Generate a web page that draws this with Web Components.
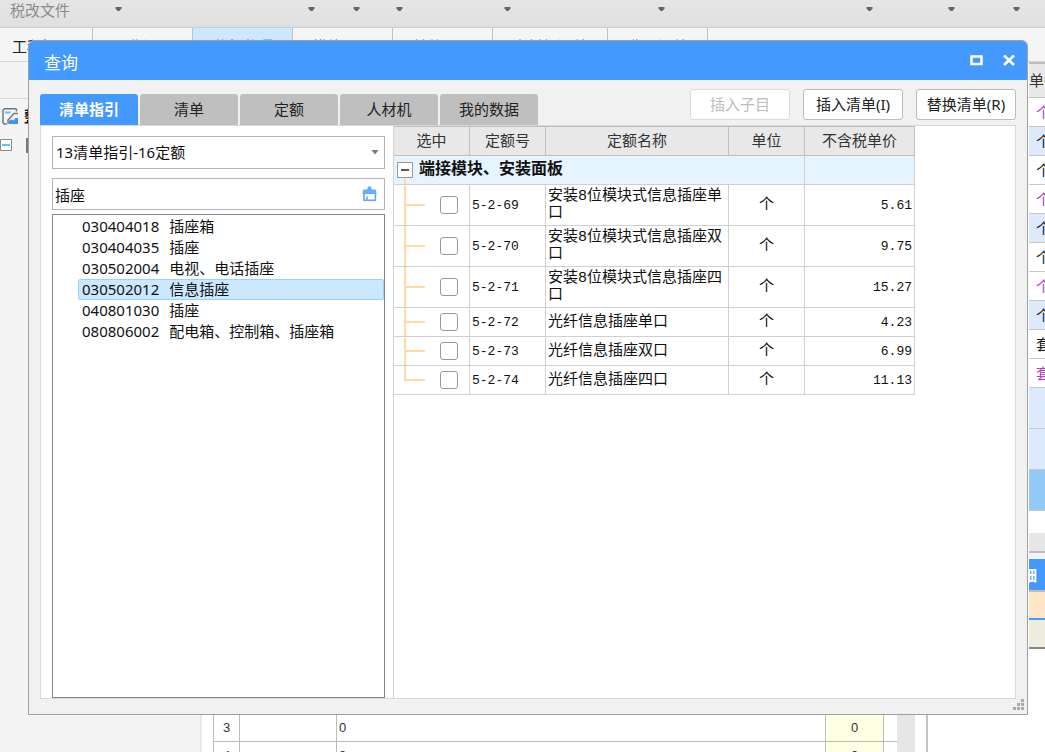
<!DOCTYPE html>
<html lang="zh-CN">
<head>
<meta charset="utf-8">
<title>查询</title>
<style>
html, body { margin: 0; height: 100%; overflow: hidden; }
body { font: 15px/21px "Noto Sans", "Noto Sans CJK SC", sans-serif; color: #111; background: #fff; }
</style>
</head>
<body>
<cost-app></cost-app>
<script>
const define = (name, html, setup) => customElements.define(name, class extends HTMLElement {
  constructor() {
    super();
    const t = document.createElement('template');
    t.innerHTML = '<style>*{box-sizing:border-box}</style>' + html;
    this.attachShadow({ mode: 'open' }).append(t.content.cloneNode(true));
  }
  connectedCallback() { if (setup) setup(this, this.shadowRoot); }
});

/* Toolbar above the workspace */
define('app-ribbon', `
<style>
:host { display: flex; flex: none; height: 28px; border-bottom: 1px solid #cbcbcb; background: linear-gradient(#e6e6e6, #dfdfdf); overflow: hidden; }
.group { display: flex; flex: none; justify-content: flex-end; }
.label { flex: 1; padding-left: 10px; color: #8c8c8c; white-space: nowrap; }
svg { flex: none; margin-top: 7px; }
</style>
<div id="row" style="display:flex"></div>`, (el, root) => {
  const widths = [123, 193, 45, 43, 108, 154, 208, 82, 65];
  root.getElementById('row').innerHTML = widths.map((w, i) =>
    `<div class="group" style="width:${w}px">${i ? '' : '<span class="label">税改文件</span>'}<svg width="8" height="5"><path d="M0.500 0h6v1.500l-2 2.500h-2l-2-2.500z" fill="#666"/></svg></div>`).join('');
});

/* Workspace tabs */
define('app-tabs', `
<style>
:host { display: flex; flex: none; height: 34px; background: #f5f5f5; border-bottom: 1px solid #d4d4d4; overflow: hidden; }
::slotted(a) { flex: none; width: 100px; border-right: 1px solid #c2c2c2; text-align: center; line-height: 36px; color: #888; text-decoration: none; }
::slotted(a:first-child) { width: 93px; padding-right: 8px; color: #222; }
::slotted(a.wide) { width: 115px; }
::slotted(a.on) { background: #cce8ff; color: #4499ff; font-weight: bold; }
</style><slot></slot>`);

/* Project tree at the left */
define('project-tree', `
<style>
:host { display: flex; flex: none; flex-direction: column; width: 202px; background: #f4f4f4; border-right: 2px solid #e8e8e8; }
.top { height: 37px; border-bottom: 1px solid #d8d8d8; }
.item { display: flex; align-items: center; gap: 5px; height: 34px; padding-left: 2px; font-weight: bold; }
.node { display: flex; gap: 14px; height: 24px; align-items: center; }
.page { width: 12px; height: 15px; border: 2px solid #777; }
</style>
<div class="top"></div>
<div class="item"><svg width="17" height="17" fill="none" stroke="#707880" stroke-width="1.500"><path d="M14.500 3.500V1.500L13.500.800H2.500L1 2v12.500L2 16h3"/><path d="M3 4.500h5.500" stroke="#6cb8ff" stroke-width="2"/><path d="M16 5.500h-4L6 12v3.500"/><path d="M6.500 16v-3l3-1.500 2 1 2-2.500H16v6z" fill="#3f95f5" stroke="none"/></svg><span>整</span></div>
<div class="node"><svg width="12" height="12"><path d="M.5.5h11v11H.5z" fill="#fff" stroke="#888"/><path d="M2 6h8" stroke="#2bb0e0" stroke-width="1.500"/></svg><span class="page"></span></div>`);

/* Bill rows, cut by the window edge */
define('bill-strip', `
<style>
:host { display: flex; flex: none; flex-direction: column; width: 119px; padding-left: 101px; overflow: hidden; border-left: 2px solid #c4c4c4; background: #fff; white-space: nowrap; }
table { border-collapse: separate; border-spacing: 0; width: 60px; border-top: 2px solid #bbb; }
th { height: 34px; padding: 0; text-align: left; font-weight: normal; background: #e8e8e8; border-bottom: 1px solid #c4c4c4; color: #333; }
td { height: 29px; padding: 0 0 0 7px; border-bottom: 1px solid #c8c8c8; color: #222; line-height: 20px; }
.blue { background: #dde9fd; } .p { color: #b040c0; }
td.tall { height: 41px; } .sel { background: #92c9f7; }
.sb { height: 18px; margin-top: 22px; background: #e6e6e6; }
.split { height: 8px; border-top: 2px solid #bdbdbd; background: #f3f3f3; }
.tab { height: 31px; color: #fff; background: #4499ff; font-weight: bold; text-indent: -7px; line-height: 32px; }
.peach { height: 28px; border-top: 2px solid #bdbdbd; background: #ffe5c8; }
.beige { height: 31px; border-top: 2px solid #4499ff; border-bottom: 2px solid #888; background: #eeeddf; }
</style>
<table><thead><tr><th>单价</th></tr></thead><tbody></tbody></table>
<div class="sb"></div><div class="split"></div><div class="tab">细</div><div class="peach"></div><div class="beige"></div>`, (el, root) => {
  const rows = [['p','个'],['blue','个'],['','个'],['p','个'],['blue','个'],['','个'],['p','个'],['blue','个'],['','套'],['p','套'],['blue tall',''],['blue tall',''],['sel tall','']];
  root.querySelector('tbody').innerHTML = rows.map(r => `<tr><td class="${r[0]}">${r[1]}</td></tr>`).join('');
});

/* Detail rows under the dialog */
define('detail-grid', `
<style>
:host { display: flex; flex: 1; min-width: 0; flex-direction: column; justify-content: flex-end; padding-left: 11px; overflow: hidden; }
.clip { display: flex; height: 38px; overflow: hidden; }
table { flex: 1; table-layout: fixed; border-collapse: separate; border-spacing: 0; border-left: 1px solid #bbb; font: 13px/18px "Liberation Sans", sans-serif; color: #333; }
td { height: 28px; padding: 0 2px; border-right: 1px solid #bbb; border-bottom: 1px solid #bbb; }
.c { text-align: center; } .y { background: #ffffe4; } td:last-child { border-right: 0; }
.sb { width: 18px; margin-right: 11px; background: #e6e6e6; }
</style>
<div class="clip"><table><colgroup><col style="width:26px"><col style="width:97px"><col><col style="width:58px"><col style="width:13px"></colgroup>
<tr><td class="c">3</td><td></td><td>0</td><td class="c y">0</td><td></td></tr>
<tr><td class="c">4</td><td></td><td>0</td><td class="c y">0</td><td></td></tr></table><div class="sb"></div></div>`);

/* Dialog frame with caption bar */
define('query-dialog', `
<style>
:host { position: absolute; inset: 40px 17px 37px 28px; display: flex; flex-direction: column; border: 1px solid #a0a0a0; border-radius: 6px 6px 0 0; background: #f1f1f1; overflow: hidden; }
header { display: flex; flex: none; align-items: center; gap: 20px; height: 39px; padding: 0 12px 0 15px; background: #4499ff; color: #fff; }
h1 { flex: 1; margin: 0; font-size: 17px; font-weight: normal; line-height: 24px; padding-top: 4px; }
button { display: flex; padding: 0; border: 0; background: none; }
main { display: flex; flex: 1; flex-direction: column; min-height: 0; padding: 9px 11px 15px; }
.grip { position: absolute; right: 3px; bottom: 4px; }
</style>
<header><h1>查询</h1>
<button aria-label="最大化"><svg width="13" height="11"><path d="M1.500 1.500h10v7.500h-10z" fill="none" stroke="#fff" stroke-width="2.500"/></svg></button>
<button aria-label="关闭"><svg width="12" height="11"><path d="M1 .500l10 9.500M11 .500L1 10" stroke="#fff" stroke-width="2.600"/></svg></button></header>
<main><slot></slot></main>
<svg class="grip" width="11" height="11" fill="#aaa"><path d="M8 0h3v3H8zM4 4h3v3H4zM8 4h3v3H8zM0 8h3v3H0zM4 8h3v3H4zM8 8h3v3H8z"/></svg>`);

define('query-toolbar', `
<style>
:host { display: flex; flex: none; justify-content: space-between; height: 36px; }
nav { display: flex; gap: 2px; align-self: flex-end; }
.actions { display: flex; gap: 13px; }
button { font: inherit; padding: 0; }
nav button { width: 98px; height: 31px; border: 0; border-radius: 3px 3px 0 0; background: #bfbfbf; color: #222; }
nav .on { background: #4499ff; color: #fff; font-weight: bold; }
.actions button { width: 100px; height: 31px; border: 1px solid #bcbcbc; border-radius: 3px; background: #fff; color: #222; }
.actions button:disabled { border-color: #dcdcdc; color: #bdbdbd; }
</style>
<nav><button class="on">清单指引</button><button>清单</button><button>定额</button><button>人材机</button><button>我的数据</button></nav>
<div class="actions"><button disabled>插入子目</button><button>插入清单(I)</button><button>替换清单(R)</button></div>`);

/* Search pane with list results */
define('guide-search', `
<style>
:host { display: flex; flex: none; flex-direction: column; width: 353px; padding: 10px 8px 0 11px; border-right: 1px solid #d4d4d4; }
label { position: relative; display: flex; margin-bottom: 9px; }
label.key { margin-bottom: 4px; }
select, input { width: 100%; height: 33px; padding: 0 30px 0 3px; border: 1px solid #b4b4b4; border-radius: 0; background: #fff; font: inherit; color: #111; appearance: none; outline: 0; }
input { height: 32px; padding-left: 2px; }
label svg { position: absolute; right: 6px; top: 14px; pointer-events: none; }
label.key svg { right: 8px; top: 8px; }
ul { flex: 1; margin: 0; padding: 1px 0 0 25px; list-style: none; border: 1px solid #828790; }
li { display: flex; gap: 10px; height: 21px; padding-left: 3px; border: 1px solid transparent; line-height: 18px; white-space: nowrap; }
li[aria-selected=true] { background: #cce8ff; border-color: #99d1ff; border-radius: 2px; }
</style>
<label><select aria-label="清单定额库"><option>13清单指引-16定额</option></select><svg width="8" height="5"><path d="M.500 0h7L4 4.500z" fill="#777"/></svg></label>
<label class="key"><input aria-label="关键字" value="插座"><svg width="15" height="16" fill="none" stroke="#5ba6ff" stroke-width="1.600"><path d="M6 4V1.500L7.500.500 9 1.500V4z" fill="#6cb0ff" stroke-width="1"/><path d="M1.500 4h12l.500 3.500H1z" fill="#6cb0ff" stroke-width="1"/><path d="M2 8v6.200h11.300L13.500 8M5 14v-3.500"/></svg></label>
<ul role="listbox"></ul>`, (el, root) => {
  const items = [['030404018','插座箱'],['030404035','插座'],['030502004','电视、电话插座'],['030502012','信息插座'],['040801030','插座'],['080806002','配电箱、控制箱、插座箱']];
  root.querySelector('ul').innerHTML = items.map(([c, n], i) => `<li role="option" aria-selected="${i === 3}"><span>${c}</span><span>${n}</span></li>`).join('');
});

/* Quota rows grouped below a branch */
define('quota-table', `
<style>
:host { display: block; flex: 1; min-width: 0; overflow: hidden; font-family: "Liberation Mono", "Noto Sans CJK SC", monospace; }
table { width: 521px; table-layout: fixed; border-collapse: separate; border-spacing: 0; border-top: 1px solid #bdbdbd; }
th, td { height: 29px; padding: 0 2px; border-right: 1px solid #d0d0d0; border-bottom: 1px solid #d0d0d0; line-height: 17px; font-weight: normal; }
th { padding-top: 2px; background: #e8e8e8; border-color: #bfbfbf; color: #333; }
.group td { background: #e5f4ff; font-size: 16px; font-weight: bold; padding-left: 3px; }
.group td:first-child { background: linear-gradient(#ffdba8, #ffdba8) 10px 100% / 2px 8px no-repeat #e5f4ff; }
.group div { display: flex; align-items: center; gap: 6px; }
.fold { display: flex; padding: 0; border: 0; background: none; }
.item .pick { padding-left: 46px; background: linear-gradient(#ffdba8, #ffdba8) 10px 0 / 2px 100% no-repeat, linear-gradient(#ffdba8, #ffdba8) 10px 50% / 21px 2px no-repeat; }
.item:last-child .pick { background-size: 2px 50%, 21px 2px; }
.two td { height: 41px; }
input { display: block; appearance: none; width: 18px; height: 18px; margin: 0; border: 1px solid #999; border-radius: 3px; background: #fff; }
.mono { font-size: 13px; } .u { text-align: center; } .price { text-align: right; }
</style>
<table><colgroup><col style="width:76px"><col style="width:76px"><col style="width:183px"><col style="width:76px"><col style="width:110px"></colgroup>
<thead><tr><th>选中</th><th>定额号</th><th>定额名称</th><th>单位</th><th>不含税单价</th></tr></thead>
<tbody><tr class="group"><td colspan="4"><div><button class="fold" aria-label="折叠"><svg width="16" height="16"><path d="M.500.500h15v15H.500z" fill="#fff" stroke="#999"/><path d="M4 8h8" stroke="#222" stroke-width="1.500"/></svg></button><span>端接模块、安装面板</span></div></td><td></td></tr></tbody></table>`, (el, root) => {
  const rows = [['69','安装8位模块式信息插座单口','5.61'],['70','安装8位模块式信息插座双口','9.75'],['71','安装8位模块式信息插座四口','15.27'],['72','光纤信息插座单口','4.23'],['73','光纤信息插座双口','6.99'],['74','光纤信息插座四口','11.13']];
  root.querySelector('tbody').insertAdjacentHTML('beforeend', rows.map(([c, n, p], i) =>
    `<tr class="item ${i < 3 ? 'two' : ''}"><td class="pick"><input type="checkbox" aria-label="5-2-${c}"></td><td class="mono">5-2-${c}</td><td>${n}</td><td class="u">个</td><td class="mono price">${p}</td></tr>`).join(''));
});

define('query-panel', `
<style>
:host { display: flex; flex: 1; min-height: 0; border: 1px solid #d9d9d9; background: #fff; }
</style><slot></slot>`);

define('cost-app', `
<style>
:host { position: relative; display: flex; flex-direction: column; height: 100vh; overflow: hidden; }
.work { display: flex; flex: 1; min-height: 0; }
</style>
<app-ribbon></app-ribbon>
<app-tabs><a href="#">工程概况</a><a href="#">取费设置</a><a href="#" class="on">分部分项</a><a href="#">措施项目</a><a href="#">其他项目</a><a href="#" class="wide">人材机汇总</a><a href="#">费用汇总</a></app-tabs>
<div class="work"><project-tree></project-tree><detail-grid></detail-grid><bill-strip></bill-strip></div>
<query-dialog><query-toolbar></query-toolbar><query-panel><guide-search></guide-search><quota-table></quota-table></query-panel></query-dialog>`);
</script>
</body>
</html>
